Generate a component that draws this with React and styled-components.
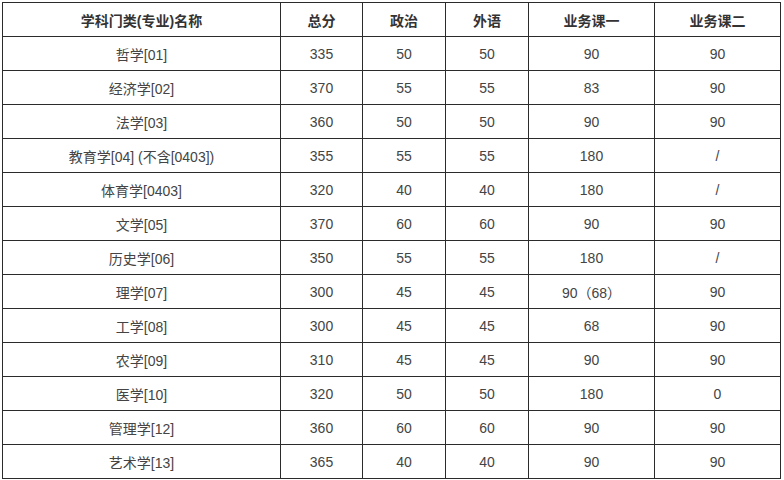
import React from 'react'
import styled, { createGlobalStyle } from 'styled-components'

const GlobalStyle = createGlobalStyle`
  html, body {
    margin: 0;
    padding: 0;
    background: #fff;
  }
  body {
    font-family: "Liberation Sans", "Noto Sans CJK SC", sans-serif;
    color: #333;
  }
`

const columns = [
  { title: '学科门类(专业)名称', width: 278 },
  { title: '总分', width: 82 },
  { title: '政治', width: 83 },
  { title: '外语', width: 83 },
  { title: '业务课一', width: 126 },
  { title: '业务课二', width: 126 }
]

const rows = [
  ['哲学[01]', '335', '50', '50', '90', '90'],
  ['经济学[02]', '370', '55', '55', '83', '90'],
  ['法学[03]', '360', '50', '50', '90', '90'],
  ['教育学[04] (不含[0403])', '355', '55', '55', '180', '/'],
  ['体育学[0403]', '320', '40', '40', '180', '/'],
  ['文学[05]', '370', '60', '60', '90', '90'],
  ['历史学[06]', '350', '55', '55', '180', '/'],
  ['理学[07]', '300', '45', '45', '90（68）', '90'],
  ['工学[08]', '300', '45', '45', '68', '90'],
  ['农学[09]', '310', '45', '45', '90', '90'],
  ['医学[10]', '320', '50', '50', '180', '0'],
  ['管理学[12]', '360', '60', '60', '90', '90'],
  ['艺术学[13]', '365', '40', '40', '90', '90']
]

export default function App () {
  return <Page>
    <GlobalStyle />
    <Table>
      <colgroup>
        {columns.map(c => <col key={c.title} style={{ width: c.width }} />)}
      </colgroup>
      <thead>
        <tr>
          {columns.map(c => <HeadCell key={c.title}>{c.title}</HeadCell>)}
        </tr>
      </thead>
      <tbody>
        {rows.map(r => <tr key={r[0]}>
          {r.map((v, i) => <Cell key={i}>{v}</Cell>)}
        </tr>)}
      </tbody>
    </Table>
  </Page>
}

const Page = styled('div')`
  padding: 2px 0 0 2px;
`

const Table = styled('table')`
  border-collapse: collapse;
  table-layout: fixed;
  width: 779px;
`

const HeadCell = styled('th')`
  height: 33px;
  padding: 0;
  border: 1px solid #2b2b2b;
  font-size: 14px;
  font-weight: bold;
  color: #333;
  text-align: center;
  vertical-align: middle;
`

const Cell = styled('td')`
  height: 33px;
  padding: 0;
  border: 1px solid #2b2b2b;
  font-size: 14px;
  color: #444;
  text-align: center;
  vertical-align: middle;
`
